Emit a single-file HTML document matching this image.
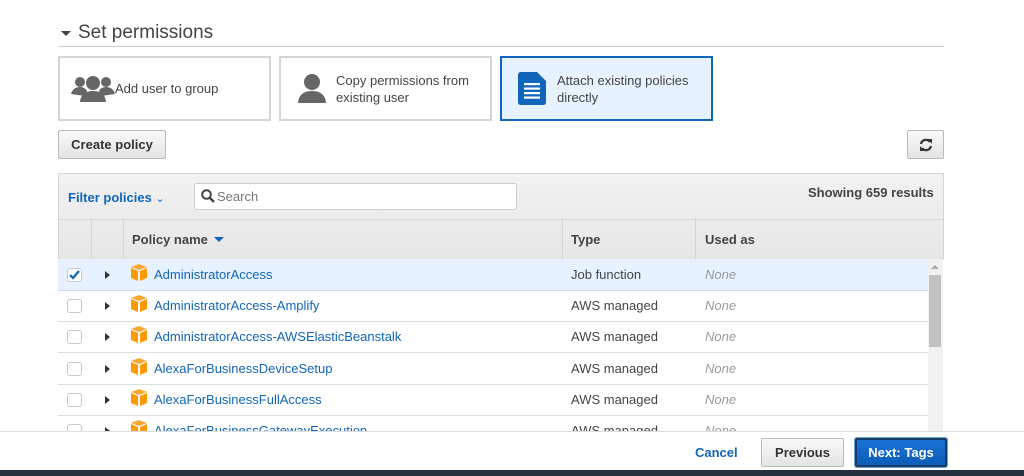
<!DOCTYPE html>
<html><head><meta charset="utf-8"><style>
*{box-sizing:border-box;margin:0;padding:0}
body{width:1024px;height:476px;overflow:hidden;background:#fff;font-family:"Liberation Sans",Arial,sans-serif;position:relative;color:#444}
.abs{position:absolute}
.card{position:absolute;top:56px;height:65px;border:2px solid #d5d5d5;background:#fff;font-size:13px;color:#444}
.card.sel{border-color:#1166bb;background:#e6f2ff}
.btn{position:absolute;border:1px solid #bbb;border-radius:2px;background:linear-gradient(#f9f9f9,#e3e3e3);font-weight:bold;font-size:13px;color:#333;text-align:center}
.row{position:absolute;left:58px;width:870px;height:32px;border-bottom:1px solid #ddd;font-size:13px}
.cb{position:absolute;left:9px;top:9px;width:15px;height:14px;border:1px solid #c8c8c8;border-radius:3px;background:#fff}
.tri{position:absolute;left:47px;top:12px;width:0;height:0;border-top:4px solid transparent;border-bottom:4px solid transparent;border-left:5px solid #333}
.cube{position:absolute;left:73px;top:5px}
.nm{position:absolute;left:96px;top:8px;color:#1166bb}
.ty{position:absolute;left:513px;top:8px;color:#444}
.us{position:absolute;left:647px;top:8px;color:#999;font-style:italic}
</style></head><body>
<div class="abs" style="left:61px;top:31px;width:0;height:0;border-left:5px solid transparent;border-right:5px solid transparent;border-top:5px solid #444"></div>
<div class="abs" style="left:78px;top:22px;font-size:19px;color:#444">Set permissions</div>
<div class="abs" style="left:58px;top:46px;width:886px;height:1px;background:#ccc"></div>

<div class="card" style="left:58px;width:213px">
<svg class="abs" style="left:11px;top:16px" width="44" height="28" viewBox="0 0 44 28"><g fill="#666"><circle cx="9" cy="8" r="5"/><circle cx="35" cy="8" r="5"/><path d="M0 20 Q2 13 9 13 Q14 13 16 17 L14 22 Z"/><path d="M44 20 Q42 13 35 13 Q30 13 28 17 L30 22 Z"/><circle cx="22" cy="9" r="7"/><path d="M9 28 Q10 17 22 17 Q34 17 35 28 Z"/></g></svg>
<div class="abs" style="left:55px;top:23px">Add user to group</div></div>

<div class="card" style="left:279px;width:213px">
<svg class="abs" style="left:16px;top:15px" width="30" height="30" viewBox="0 0 30 30"><g fill="#666"><circle cx="15" cy="9" r="8"/><path d="M1 30 Q2 18 15 18 Q28 18 29 30 Z"/></g></svg>
<div class="abs" style="left:55px;top:14px;line-height:17px">Copy permissions from<br>existing user</div></div>

<div class="card sel" style="left:500px;width:213px">
<svg class="abs" style="left:16px;top:14px" width="28" height="33" viewBox="0 0 28 33"><path d="M3 0 H19 L28 9 V30 Q28 33 25 33 H3 Q0 33 0 30 V3 Q0 0 3 0Z" fill="#1166bb"/><g fill="#fff"><rect x="6" y="11" width="16" height="2.2"/><rect x="6" y="15.5" width="16" height="2.2"/><rect x="6" y="20" width="16" height="2.2"/><rect x="6" y="24.5" width="16" height="2.2"/></g></svg>
<div class="abs" style="left:55px;top:14px;line-height:17px">Attach existing policies<br>directly</div></div>

<div class="btn" style="left:58px;top:130px;width:108px;height:29px;line-height:27px">Create policy</div>
<div class="btn" style="left:907px;top:130px;width:37px;height:29px">
<svg class="abs" style="left:11px;top:7px" width="14" height="14" viewBox="0 0 14 14"><g fill="none" stroke="#333" stroke-width="2.2"><path d="M2 6 A5 5 0 0 1 11 4"/><path d="M12 8 A5 5 0 0 1 3 10"/></g><path d="M9 1 L13 1 L13 6Z" fill="#333"/><path d="M5 13 L1 13 L1 8Z" fill="#333"/></svg></div>

<div class="abs" style="left:58px;top:173px;width:886px;height:87px;background:linear-gradient(#f2f2f2,#e6e6e6);border:1px solid #d5d5d5"></div>
<div class="abs" style="left:58px;top:219px;width:886px;height:1px;background:#d5d5d5"></div>
<div class="abs" style="left:68px;top:190px;font-size:13px;font-weight:bold;color:#1166bb">Filter policies <span style="font-weight:normal;font-size:11px">&#8964;</span></div>
<div class="abs" style="left:194px;top:183px;width:323px;height:27px;background:#fff;border:1px solid #ccc;border-radius:3px"></div>
<svg class="abs" style="left:201px;top:189px" width="14" height="14" viewBox="0 0 14 14"><circle cx="5.5" cy="5.5" r="4.3" fill="none" stroke="#444" stroke-width="2"/><path d="M8.5 8.5 L13 13" stroke="#444" stroke-width="2.4"/></svg>
<div class="abs" style="left:217px;top:189px;font-size:13px;color:#777">Search</div>
<div class="abs" style="left:808px;top:185px;font-size:13px;font-weight:bold;color:#444">Showing 659 results</div>
<div class="abs" style="left:91px;top:220px;width:1px;height:39px;background:#d5d5d5"></div>
<div class="abs" style="left:123px;top:220px;width:1px;height:39px;background:#d5d5d5"></div>
<div class="abs" style="left:562px;top:220px;width:1px;height:39px;background:#d5d5d5"></div>
<div class="abs" style="left:695px;top:220px;width:1px;height:39px;background:#d5d5d5"></div>
<div class="abs" style="left:132px;top:232px;font-size:13px;font-weight:bold;color:#444">Policy name</div>
<div class="abs" style="left:214px;top:237px;width:0;height:0;border-left:5px solid transparent;border-right:5px solid transparent;border-top:5px solid #1166bb"></div>
<div class="abs" style="left:571px;top:232px;font-size:13px;font-weight:bold;color:#444">Type</div>
<div class="abs" style="left:705px;top:232px;font-size:13px;font-weight:bold;color:#444">Used as</div>

<div class="row" style="top:259px;background:#e6f2ff;border-bottom-color:#d5dde8"><div class="cb"><svg width="13" height="12" viewBox="0 0 13 12"><path d="M2 6 L5 9 L11 2" fill="none" stroke="#1166bb" stroke-width="2.2"/></svg></div><div class="tri"></div><svg class="cube" width="16" height="17" viewBox="0 0 16 17"><path d="M8 0 L16 3 L8 6 L0 3Z" fill="#f7a833"/><path d="M0 4 L7 7 V17 L0 14Z" fill="#f90"/><path d="M16 4 L9 7 V17 L16 14Z" fill="#f90"/></svg><div class="nm">AdministratorAccess</div><div class="ty">Job function</div><div class="us">None</div></div>
<div class="row" style="top:290px"><div class="cb"></div><div class="tri"></div><svg class="cube" width="16" height="17" viewBox="0 0 16 17"><path d="M8 0 L16 3 L8 6 L0 3Z" fill="#f7a833"/><path d="M0 4 L7 7 V17 L0 14Z" fill="#f90"/><path d="M16 4 L9 7 V17 L16 14Z" fill="#f90"/></svg><div class="nm">AdministratorAccess-Amplify</div><div class="ty">AWS managed</div><div class="us">None</div></div>
<div class="row" style="top:321px"><div class="cb"></div><div class="tri"></div><svg class="cube" width="16" height="17" viewBox="0 0 16 17"><path d="M8 0 L16 3 L8 6 L0 3Z" fill="#f7a833"/><path d="M0 4 L7 7 V17 L0 14Z" fill="#f90"/><path d="M16 4 L9 7 V17 L16 14Z" fill="#f90"/></svg><div class="nm">AdministratorAccess-AWSElasticBeanstalk</div><div class="ty">AWS managed</div><div class="us">None</div></div>
<div class="row" style="top:353px"><div class="cb"></div><div class="tri"></div><svg class="cube" width="16" height="17" viewBox="0 0 16 17"><path d="M8 0 L16 3 L8 6 L0 3Z" fill="#f7a833"/><path d="M0 4 L7 7 V17 L0 14Z" fill="#f90"/><path d="M16 4 L9 7 V17 L16 14Z" fill="#f90"/></svg><div class="nm">AlexaForBusinessDeviceSetup</div><div class="ty">AWS managed</div><div class="us">None</div></div>
<div class="row" style="top:384px"><div class="cb"></div><div class="tri"></div><svg class="cube" width="16" height="17" viewBox="0 0 16 17"><path d="M8 0 L16 3 L8 6 L0 3Z" fill="#f7a833"/><path d="M0 4 L7 7 V17 L0 14Z" fill="#f90"/><path d="M16 4 L9 7 V17 L16 14Z" fill="#f90"/></svg><div class="nm">AlexaForBusinessFullAccess</div><div class="ty">AWS managed</div><div class="us">None</div></div>
<div class="row" style="top:415px"><div class="cb"></div><div class="tri"></div><svg class="cube" width="16" height="17" viewBox="0 0 16 17"><path d="M8 0 L16 3 L8 6 L0 3Z" fill="#f7a833"/><path d="M0 4 L7 7 V17 L0 14Z" fill="#f90"/><path d="M16 4 L9 7 V17 L16 14Z" fill="#f90"/></svg><div class="nm">AlexaForBusinessGatewayExecution</div><div class="ty">AWS managed</div><div class="us">None</div></div>

<div class="abs" style="left:928px;top:259px;width:15px;height:180px;background:#f1f1f1"></div>
<div class="abs" style="left:931px;top:265px;width:0;height:0;border-left:4px solid transparent;border-right:4px solid transparent;border-bottom:4px solid #aaa"></div>
<div class="abs" style="left:929px;top:275px;width:12px;height:72px;background:#c1c1c1"></div>

<div class="abs" style="left:0;top:431px;width:1024px;height:39px;background:#fff;border-top:1px solid #ddd"></div>
<div class="abs" style="left:695px;top:445px;font-size:13px;font-weight:bold;color:#1166bb">Cancel</div>
<div class="btn" style="left:761px;top:438px;width:83px;height:29px;line-height:27px">Previous</div>
<div class="abs" style="left:855px;top:438px;width:92px;height:29px;border:2px solid #1a3a66;box-shadow:0 0 0 1px #6fa0d8;border-radius:2px;background:linear-gradient(#1a73d4,#0e5cb8);color:#fff;font-weight:bold;font-size:13px;text-align:center;line-height:25px">Next: Tags</div>
<div class="abs" style="left:0;top:470px;width:1024px;height:6px;background:#232f3e"></div>
</body></html>
